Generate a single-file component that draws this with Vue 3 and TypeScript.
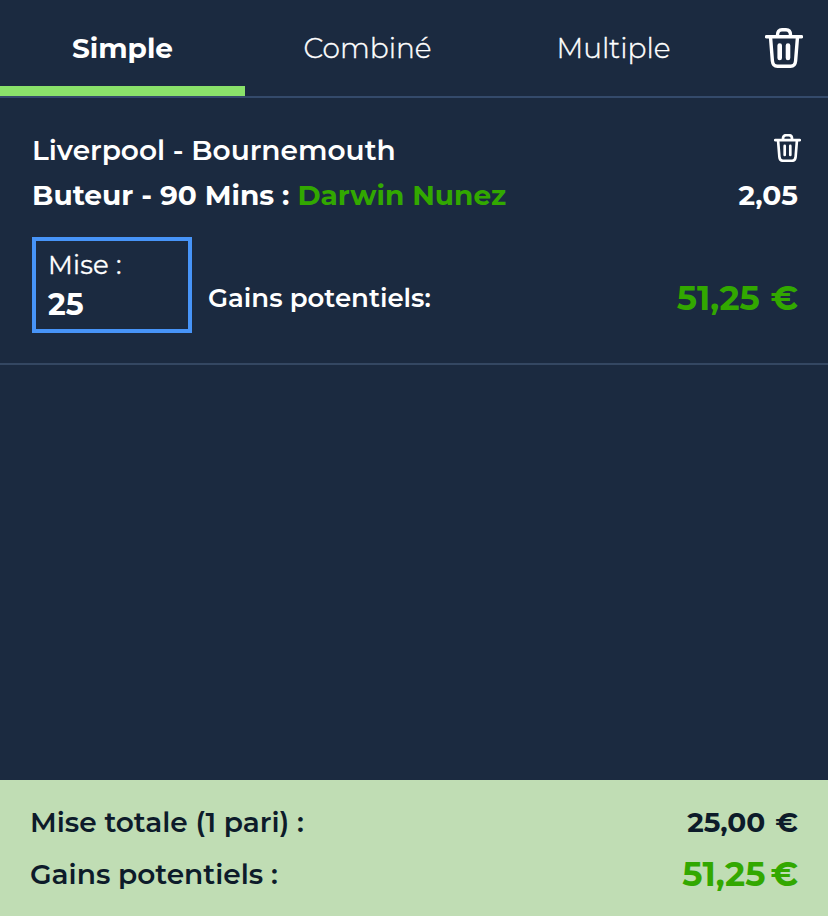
<script setup lang="ts">
import { computed, ref } from 'vue'

const tabs = ['Simple', 'Combiné', 'Multiple']
const activeTab = ref(0)
const stake = ref(25)
const odds = ref(2.05)
const format = (value: number): string => value.toFixed(2).replace('.', ',')
const winnings = computed(() => format(stake.value * odds.value))
</script>

<template>
  <main class="slip">
    <nav class="tabs">
      <button
        v-for="(tab, index) in tabs"
        :key="tab"
        class="tab"
        :class="{ active: index === activeTab }"
        @click="activeTab = index"
      ><span>{{ tab }}</span></button>
      <button class="clear" aria-label="Tout supprimer">
        <svg class="trash trash-large" viewBox="0 0 38 40" fill="none" stroke="currentColor">
          <path d="M1.5 8.7H36.5" />
          <path d="M12.5 8.2V7Q12.5 1.7 17 1.7H21Q25.5 1.7 25.5 7V8.2" />
          <path d="M5.5 9L7.4 32.8Q7.9 38.2 12.4 38.2H25.6Q30.1 38.2 30.6 32.8L32.5 9" />
          <path class="bars" d="M14.7 17.5V30M23 17.5V30" />
        </svg>
      </button>
    </nav>

    <section class="bet">
      <div class="row match">
        <span class="fixture">Liverpool - Bournemouth</span>
        <button class="remove" aria-label="Supprimer">
          <svg class="trash trash-small" viewBox="0 0 38 40" fill="none" stroke="currentColor">
            <path d="M1.5 8.7H36.5" />
            <path d="M12.5 8.2V7Q12.5 1.7 17 1.7H21Q25.5 1.7 25.5 7V8.2" />
            <path d="M5.5 9L7.4 32.8Q7.9 38.2 12.4 38.2H25.6Q30.1 38.2 30.6 32.8L32.5 9" />
            <path d="M15 17V30M23 17V30" />
          </svg>
        </button>
      </div>
      <div class="row selection">
        <span class="market">Buteur - 90 Mins :</span>
        <span class="player">Darwin Nunez</span>
        <span class="odds">{{ format(odds) }}</span>
      </div>
      <div class="row stake-row">
        <div class="stake">
          <span class="stake-label">Mise :</span>
          <span class="stake-value">{{ stake }}</span>
        </div>
        <span class="gains-label">Gains potentiels:</span>
        <span class="gains">{{ winnings }} €</span>
      </div>
    </section>

    <footer class="totals">
      <div class="row total">
        <span class="total-label">Mise totale (1 pari) :</span>
        <span class="total-value">{{ format(stake) }} €</span>
      </div>
      <div class="row potential">
        <span class="potential-label">Gains potentiels :</span>
        <span class="potential-value"><span>{{ winnings }}</span><span>€</span></span>
      </div>
    </footer>
  </main>
</template>

<style>
body {
  background: #1b2a40;
}
</style>

<style scoped>
.slip {
  box-sizing: border-box;
  height: 100vh;
  display: flex;
  flex-direction: column;
  background: #1b2a40;
  color: #fff;
  font-family: Montserrat, Inter, sans-serif;
  font-size: 28px;
  line-height: 34px;
  white-space: nowrap;
}
button {
  margin: 0;
  padding: 0;
  border: 0;
  background: none;
  color: inherit;
  font: inherit;
}
.tabs {
  box-sizing: border-box;
  flex: none;
  height: 98px;
  display: grid;
  grid-template-columns: 245px 245px 247px 1fr;
  border-bottom: 2px solid #344a6b;
}
.tab {
  box-sizing: border-box;
  border-bottom: 10px solid transparent;
  padding-top: 9px;
  font-weight: 300;
  -webkit-text-stroke: 0.4px currentColor;
}
.tab.active {
  border-color: #8ae26a;
  font-weight: 700;
  -webkit-text-stroke: 0;
}
.clear {
  display: flex;
  align-items: center;
  padding-left: 28px;
}
.trash {
  display: block;
  stroke-width: 3.4;
  stroke-linecap: round;
  stroke-linejoin: round;
}
.trash-large { width: 38px; height: 40px; }
.trash-large .bars { stroke-width: 4.6; }
.trash-small {
  width: 27px;
  height: 28px;
  stroke-width: 3.8;
}
.row {
  display: flex;
  align-items: center;
}
.bet {
  box-sizing: border-box;
  flex: none;
  height: 267px;
  padding: 35px 30px 0 32px;
  border-bottom: 2px solid #344762;
}
.match {
  height: 34px;
  justify-content: space-between;
  font-weight: 600;
}
.remove { margin: -4px -3px 0 0; }
.selection {
  height: 34px;
  margin-top: 11px;
  gap: 8px;
  font-weight: 700;
}
.player { color: #32a800; }
.odds { margin-left: auto; }
.stake-row {
  height: 96px;
  margin-top: 25px;
}
.stake {
  box-sizing: border-box;
  width: 160px;
  height: 96px;
  display: flex;
  flex-direction: column;
  gap: 6px;
  padding: 7px 12px;
  border: 4px solid #4794f8;
}
.stake-label {
  font-size: 26px;
  letter-spacing: 0.2px;
  -webkit-text-stroke: 0.3px currentColor;
}
.stake-value {
  font-size: 30px;
  font-weight: 700;
}
.gains-label {
  margin: 26px 0 0 16px;
  font-size: 26px;
  font-weight: 600;
}
.gains {
  margin: 26px 0 0 auto;
  color: #32a800;
  font-size: 34px;
  font-weight: 700;
  word-spacing: 1px;
}
.totals {
  box-sizing: border-box;
  flex: none;
  height: 136px;
  margin-top: auto;
  padding: 25px 30px 0;
  background: #c0ddb4;
  color: #0d1b2a;
}
.total, .potential {
  height: 34px;
  justify-content: space-between;
  font-weight: 600;
}
.potential { margin-top: 18px; }
.total-value {
  font-weight: 700;
  word-spacing: 2px;
}
.potential-value {
  display: flex;
  gap: 5px;
  color: #32a800;
  font-size: 34px;
  font-weight: 700;
}
</style>
